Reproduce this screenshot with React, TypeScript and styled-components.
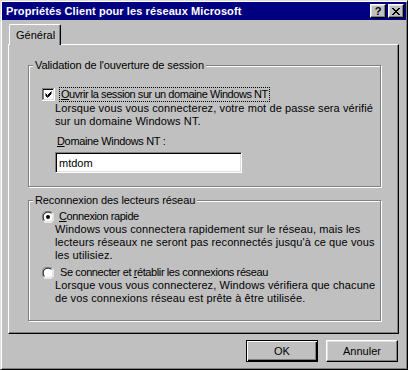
import styled, { createGlobalStyle } from 'styled-components';

const GlobalStyle = createGlobalStyle`
  html, body {
    margin: 0;
    padding: 0;
    background: #c0c0c0;
  }
  body {
    font-family: "Liberation Sans", Arial, sans-serif;
    font-size: 11px;
    color: #000;
  }
`;

const Window = styled.div`
  box-sizing: border-box;
  width: 408px;
  height: 370px;
  padding: 1px;
  background: #c0c0c0;
  border: 1px solid;
  border-color: #dfdfdf #000 #000 #dfdfdf;
  box-shadow: inset 1px 1px #fff, inset -1px -1px #808080;
  display: flex;
  flex-direction: column;
`;

const TitleBar = styled.div`
  height: 18px;
  background: #000080;
  display: flex;
  align-items: center;
  justify-content: space-between;
  padding: 0 2px 0 4px;
`;

const TitleText = styled.span`
  color: #fff;
  font-weight: bold;
  font-size: 11px;
  letter-spacing: 0.1px;
  white-space: nowrap;
`;

const CaptionButtons = styled.div`
  display: flex;
  gap: 2px;
`;

const CaptionButton = styled.div`
  box-sizing: border-box;
  width: 16px;
  height: 14px;
  background: #c0c0c0;
  border: 1px solid;
  border-color: #fff #000 #000 #fff;
  box-shadow: inset -1px -1px #808080, inset 1px 1px #dfdfdf;
  display: flex;
  align-items: center;
  justify-content: center;
  font-weight: bold;
  font-size: 11px;
  line-height: 1;
`;

const Body = styled.div`
  display: flex;
  flex-direction: column;
  padding: 4px 7px 0 6px;
`;

const TabStrip = styled.div`
  display: flex;
  padding-left: 1px;
  position: relative;
  z-index: 1;
  margin-bottom: -1px;
`;

const Tab = styled.div`
  box-sizing: border-box;
  height: 21px;
  padding: 0 5px 0 6px;
  background: #c0c0c0;
  border-top: 1px solid #fff;
  border-left: 1px solid #fff;
  border-right: 1px solid #000;
  box-shadow: inset -1px 0 #808080;
  border-top-left-radius: 2px;
  border-top-right-radius: 2px;
  display: flex;
  align-items: center;
`;

const Panel = styled.div`
  border: 1px solid;
  border-color: #fff #000 #000 #fff;
  box-shadow: inset -1px -1px #808080;
  padding: 14px 17px 12px 19px;
  display: flex;
  flex-direction: column;
  gap: 7px;
`;

const Group = styled.fieldset<{ $top: number; $bottom: number }>`
  margin: 0;
  min-width: 0;
  border: 1px solid #808080;
  box-shadow: 1px 1px 0 #fff, inset 1px 1px 0 #fff;
  padding: ${p => p.$top}px 0 ${p => p.$bottom}px 0;
  display: flex;
  flex-direction: column;
`;

const Legend = styled.legend`
  margin-left: 4px;
  padding: 0 2px;
  line-height: 13px;
  letter-spacing: -0.1px;
  background: #c0c0c0;
`;

const OptionRow = styled.div`
  display: flex;
  align-items: center;
  padding-left: 13px;
  gap: 4px;
`;

const FocusLabel = styled.span`
  border: 1px dotted #000;
  padding: 0 1px;
  line-height: 13px;
  letter-spacing: -0.45px;
`;

const Label = styled.span<{ $shift?: number }>`
  line-height: 13px;
  letter-spacing: -0.4px;
  padding-left: ${p => p.$shift ?? 1}px;
`;

const Description = styled.div`
  padding-left: 26px;
  line-height: 13px;
  letter-spacing: 0.1px;
  white-space: nowrap;
`;

const FieldLabel = styled.div`
  padding-left: 28px;
  margin-top: 7px;
  line-height: 13px;
  letter-spacing: -0.35px;
`;

const TextInput = styled.div`
  box-sizing: border-box;
  margin: 4px 0 0 26px;
  width: 187px;
  height: 21px;
  background: #fff;
  border: 1px solid;
  border-color: #808080 #fff #fff #808080;
  box-shadow: inset 1px 1px #000, inset -1px -1px #dfdfdf;
  padding: 0 3px;
  display: flex;
  align-items: center;
`;

const Spacer = styled.div<{ $h: number }>`
  height: ${p => p.$h}px;
`;

const Footer = styled.div`
  display: flex;
  justify-content: flex-end;
  gap: 8px;
  margin-top: 6px;
  padding-right: 1px;
`;

const Button = styled.div<{ $default?: boolean }>`
  box-sizing: border-box;
  width: 72px;
  height: 22px;
  display: flex;
  align-items: center;
  justify-content: center;
  background: #c0c0c0;
  border: 1px solid;
  border-color: ${p => (p.$default ? '#000' : '#fff #000 #000 #fff')};
  box-shadow: ${p =>
    p.$default
      ? 'inset 1px 1px #fff, inset -1px -1px #000, inset -2px -2px #808080'
      : 'inset -1px -1px #808080, inset 1px 1px #dfdfdf'};
`;

const Checkbox = () => (
  <svg width="13" height="13" viewBox="0 0 13 13">
    <rect x="0" y="0" width="13" height="13" fill="#fff" />
    <path d="M0 12.5V0.5H12.5" stroke="#808080" fill="none" />
    <path d="M1 11.5V1.5H11.5" stroke="#000" fill="none" />
    <path d="M0.5 13V12.5H12.5V0" stroke="#fff" fill="none" />
    <path d="M1.5 11.5H11.5V1" stroke="#dfdfdf" fill="none" />
    <path d="M3.5 5.5L5.5 7.5L9.5 3.5M3.5 6.5L5.5 8.5L9.5 4.5M3.5 7.5L5.5 9.5L9.5 5.5" stroke="#000" fill="none" />
  </svg>
);

const Radio = ({ checked }: { checked?: boolean }) => (
  <svg width="12" height="12" viewBox="0 0 12 12">
    <circle cx="6" cy="6" r="5.5" fill="#fff" />
    <path d="M1.6 10.4A5.5 5.5 0 0 1 10.4 1.6" stroke="#808080" fill="none" />
    <path d="M2.5 9.5A4.5 4.5 0 0 1 9.5 2.5" stroke="#000" fill="none" />
    <path d="M10.4 1.6A5.5 5.5 0 0 1 1.6 10.4" stroke="#fff" fill="none" />
    <path d="M9.5 2.5A4.5 4.5 0 0 1 2.5 9.5" stroke="#dfdfdf" fill="none" />
    {checked && <circle cx="6" cy="6" r="2" fill="#000" />}
  </svg>
);

const CloseIcon = () => (
  <svg width="8" height="7" viewBox="0 0 8 7">
    <path d="M0 0h2v1h1v1h2v-1h1v-1h2v1h-1v1h-1v1h-1v1h1v1h1v1h1v1h-2v-1h-1v-1h-2v1h-1v1h-2v-1h1v-1h1v-1h1v-1h-1v-1h-1v-1h-1z" fill="#000" />
  </svg>
);

export default function App() {
  return (
    <>
      <GlobalStyle />
      <Window>
        <TitleBar>
          <TitleText>Propriétés Client pour les réseaux Microsoft</TitleText>
          <CaptionButtons>
            <CaptionButton>?</CaptionButton>
            <CaptionButton>
              <CloseIcon />
            </CaptionButton>
          </CaptionButtons>
        </TitleBar>
        <Body>
          <TabStrip>
            <Tab>Général</Tab>
          </TabStrip>
          <Panel>
            <Group $top={15} $bottom={13}>
              <Legend>Validation de l'ouverture de session</Legend>
              <OptionRow>
                <Checkbox />
                <FocusLabel>
                  <u>O</u>uvrir la session sur un domaine Windows NT
                </FocusLabel>
              </OptionRow>
              <Description>
                Lorsque vous vous connecterez, votre mot de passe sera vérifié
                <br />
                sur un domaine Windows NT.
              </Description>
              <FieldLabel>
                <u>D</u>omaine Windows NT :
              </FieldLabel>
              <TextInput>mtdom</TextInput>
            </Group>
            <Group $top={3} $bottom={15}>
              <Legend>Reconnexion des lecteurs réseau</Legend>
              <OptionRow>
                <Radio checked />
                <Label>
                  <u>C</u>onnexion rapide
                </Label>
              </OptionRow>
              <Description>
                Windows vous connectera rapidement sur le réseau, mais les
                <br />
                lecteurs réseaux ne seront pas reconnectés jusqu'à ce que vous
                <br />
                les utilisiez.
              </Description>
              <Spacer $h={4} />
              <OptionRow>
                <Radio />
                <Label $shift={2}>
                  Se connecter et <u>r</u>établir les connexions réseau
                </Label>
              </OptionRow>
              <Description>
                Lorsque vous vous connecterez, Windows vérifiera que chacune
                <br />
                de vos connexions réseau est prête à être utilisée.
              </Description>
            </Group>
          </Panel>
          <Footer>
            <Button $default>OK</Button>
            <Button>Annuler</Button>
          </Footer>
        </Body>
      </Window>
    </>
  );
}
